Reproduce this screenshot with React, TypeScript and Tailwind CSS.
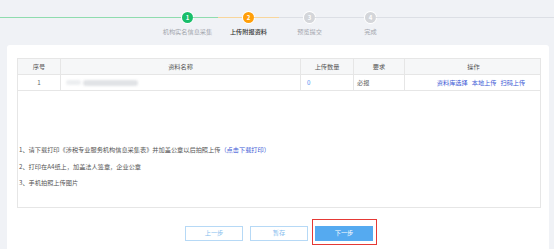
import React from 'react';

const steps = [
  { label: '机构实名信息采集', state: 'done' },
  { label: '上传附报资料', state: 'current' },
  { label: '预览提交', state: 'todo' },
  { label: '完成', state: 'todo' },
];

function Dot({ n, state }: { n: number; state: string }) {
  const bg =
    state === 'done' ? 'bg-[#19be6b]' : state === 'current' ? 'bg-[#ff9f0a]' : 'bg-[#d4d6da]';
  return (
    <div
      className={`w-[11px] h-[11px] shrink-0 rounded-full ${bg} ring-1 ring-white flex items-center justify-center text-white text-[6px] leading-none font-bold`}
    >
      {n}
    </div>
  );
}

const cols = 'grid grid-cols-[43px_240px_53px_51px_137px]';

export default function App() {
  return (
    <div
      className="w-[554px] h-[249px] overflow-hidden bg-[#f0f2f6]"
      style={{ fontFamily: '"Noto Sans CJK SC", "Noto Sans", sans-serif' }}
    >
      {/* step bar */}
      <div className="h-[45px]">
        <div className="flex items-center pt-[12px]">
          <div className="w-[182px] h-px bg-[#8fdcae]" />
          <Dot n={1} state="done" />
          <div className="w-[25px] h-px bg-[#8fdcae]" />
          <div className="w-[25px] h-px bg-[#f8d69c]" />
          <Dot n={2} state="current" />
          <div className="w-[25px] h-px bg-[#f8d69c]" />
          <div className="w-[25px] h-px bg-[#dcdfe5]" />
          <Dot n={3} state="todo" />
          <div className="w-[50px] h-px bg-[#dcdfe5]" />
          <Dot n={4} state="todo" />
          <div className="flex-1 h-px bg-[#dcdfe5]" />
        </div>
        <div className="flex mt-[5px] text-[6.2px] leading-[8px]">
          <div className="w-[157px]" />
          {steps.map((s) => (
            <div
              key={s.label}
              className={`w-[61px] text-center whitespace-nowrap ${
                s.state === 'current' ? 'text-[#333] font-medium' : 'text-[#a3a6ad]'
              }`}
            >
              {s.label}
            </div>
          ))}
        </div>
      </div>

      {/* card */}
      <div className="ml-[7px] w-[542px] h-[220px] bg-white rounded-[3px] pt-[13px] pl-[10px] pr-[8px]">
        <div className="border border-[#e6e6e6] text-[6.2px]">
          <div className={`${cols} h-[16px] bg-[#f6f7f8] text-[#555] border-b border-[#e6e6e6]`}>
            <div className="flex items-center justify-center border-r border-[#e6e6e6]">序号</div>
            <div className="flex items-center justify-center border-r border-[#e6e6e6]">资料名称</div>
            <div className="flex items-center justify-center border-r border-[#e6e6e6]">上传数量</div>
            <div className="flex items-center justify-center border-r border-[#e6e6e6]">要求</div>
            <div className="flex items-center justify-center">操作</div>
          </div>
          <div className={`${cols} h-[16px] text-[#666] border-b border-[#e6e6e6]`}>
            <div className="flex items-center justify-center border-r border-[#e6e6e6]">1</div>
            <div className="flex items-center gap-[2px] pl-[5px] border-r border-[#e6e6e6]">
              <div className="w-[15px] h-[5px] bg-[#eceef0] blur-[1px] rounded" />
              <div className="w-[55px] h-[6px] bg-[#e1e3e6] blur-[1px] rounded" />
            </div>
            <div className="flex items-center pl-[6px] text-[#4a8cf0] border-r border-[#e6e6e6]">0</div>
            <div className="flex items-center pl-[3px] border-r border-[#e6e6e6]">必报</div>
            <div className="flex items-center justify-center gap-[4px] pl-[15px] text-[#3c5ad6]">
              <span>资料库选择</span>
              <span>本地上传</span>
              <span>扫码上传</span>
            </div>
          </div>
          <div className="pt-[51px] pb-[15px] pl-[1px] text-[#555] leading-[16.5px]">
            <div>
              1、请下载打印《涉税专业服务机构信息采集表》并加盖公章以后拍照上传
              <span className="text-[#3c5ad6]">（点击下载打印）</span>
            </div>
            <div>2、打印在A4纸上，加盖法人签章，企业公章</div>
            <div>3、手机拍照上传图片</div>
          </div>
        </div>

        <div className="flex justify-center gap-[7px] mt-[18px] text-[6.2px]">
          <button className="w-[58px] h-[15px] border border-[#b6d9f6] text-[#86bdee] bg-white">
            上一步
          </button>
          <button className="w-[58px] h-[15px] border border-[#b6d9f6] text-[#86bdee] bg-white">
            暂存
          </button>
          <div className="relative">
            <button className="w-[58px] h-[15px] bg-[#55aaf0] text-white">下一步</button>
            <span className="absolute -left-[3px] -right-[4px] -top-[7px] -bottom-[4px] border border-[#e53935] pointer-events-none" />
          </div>
        </div>
      </div>
    </div>
  );
}
